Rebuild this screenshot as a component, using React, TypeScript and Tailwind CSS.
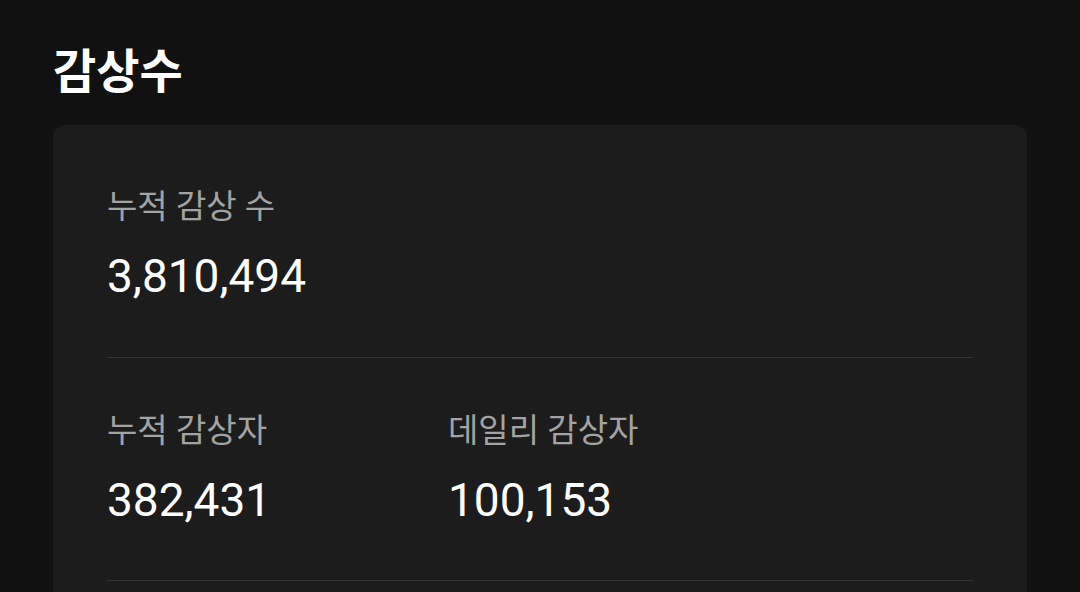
import React from 'react';

const kr = "font-['Roboto','Noto_Sans_CJK_KR',sans-serif]";

function Stat({ label, value }: { label: string; value: string }) {
  return (
    <div className="flex flex-col gap-[22px]">
      <span className={`${kr} text-[33px] leading-[40px] text-[#a3a3a3]`}>{label}</span>
      <span className={`${kr} text-[46px] leading-[54px] text-white`}>{value}</span>
    </div>
  );
}

export default function App() {
  return (
    <div className="min-h-[592px] bg-[#111111] px-[53px] pt-[38px]">
      <h1 className="font-['Noto_Sans_CJK_KR',sans-serif] text-[47px] leading-[60px] font-bold text-white">
        감상수
      </h1>
      <div className="mt-[27px] w-[974px] rounded-xl bg-[#1c1c1c] px-[54px] pt-[9px]">
        <div className="border-b border-[#333333] pt-[53px] pb-[54px]">
          <Stat label="누적 감상 수" value="3,810,494" />
        </div>
        <div className="flex border-b border-[#333333] py-[53px]">
          <div className="w-[341px]">
            <Stat label="누적 감상자" value="382,431" />
          </div>
          <Stat label="데일리 감상자" value="100,153" />
        </div>
        <div className="h-[40px]" />
      </div>
    </div>
  );
}
